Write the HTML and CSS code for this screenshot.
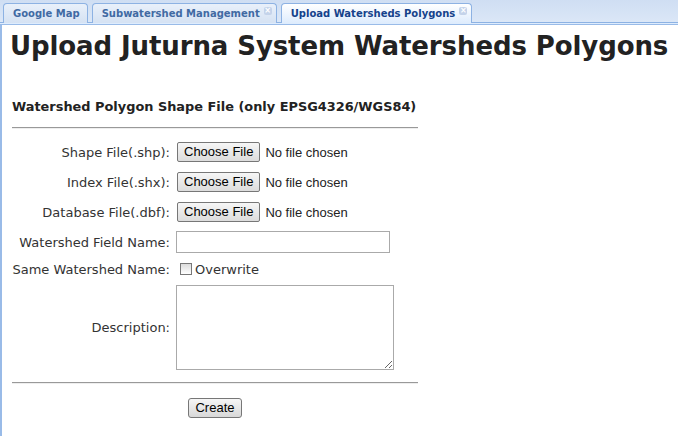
FILE: index.html
```html
<!DOCTYPE html>
<html>
<head>
<meta charset="utf-8">
<link rel="stylesheet" href="styles.css">
</head>
<body>
<div class="tabstrip">
  <div class="tab"><span class="tab-label">Google Map</span></div>
  <div class="tab closable"><span class="tab-label">Subwatershed Management</span><span class="tab-close">×</span></div>
  <div class="tab closable active"><span class="tab-label">Upload Watersheds Polygons</span><span class="tab-close">×</span></div>
</div>
<div class="tab-edge"></div>
<div class="panel">
  <h1 class="title">Upload Juturna System Watersheds Polygons</h1>
  <div class="section">
    <h2 class="section-title">Watershed Polygon Shape File (only EPSG4326/WGS84)</h2>
    <div class="rule"></div>
    <div class="form">
      <div class="lbl">Shape File(.shp):</div>
      <div class="fld"><span class="filebtn">Choose File</span><span class="nofile">No file chosen</span></div>
      <div class="lbl">Index File(.shx):</div>
      <div class="fld"><span class="filebtn">Choose File</span><span class="nofile">No file chosen</span></div>
      <div class="lbl">Database File(.dbf):</div>
      <div class="fld"><span class="filebtn">Choose File</span><span class="nofile">No file chosen</span></div>
      <div class="lbl">Watershed Field Name:</div>
      <div class="fld"><input class="textin" type="text"></div>
      <div class="lbl">Same Watershed Name:</div>
      <div class="fld"><span class="check"></span><span class="chklabel">Overwrite</span></div>
      <div class="lbl">Description:</div>
      <div class="fld"><textarea class="desc"></textarea></div>
    </div>
    <div class="rule rule2"></div>
    <div class="actions"><span class="btn">Create</span></div>
  </div>
</div>
</body>
</html>
```
FILE: styles.css
```css
html, body { margin: 0; padding: 0; background: #fff; }
body { width: 678px; height: 436px; overflow: hidden; font-family: "DejaVu Sans", Verdana, sans-serif; }

.tabstrip {
  height: 23px;
  box-sizing: border-box;
  background: linear-gradient(#cfdef3, #dbe7f7);
  border-bottom: 1px solid #8db2e3;
  display: flex;
  align-items: flex-end;
  padding-left: 3px;
  gap: 4px;
}
.tab {
  height: 20px;
  box-sizing: border-box;
  border: 1px solid #8db2e3;
  border-bottom: none;
  border-radius: 4px 4px 0 0;
  background: linear-gradient(#e9f0fa, #d5e2f3);
  margin-bottom: -1px;
  display: flex;
  align-items: center;
  padding: 0 7px 0 9px;
  font-size: 10px;
  font-weight: bold;
  color: #416aa3;
  white-space: nowrap;
}
.tab.closable { padding-right: 4px; }
.tab.active {
  background: linear-gradient(#ffffff, #deecfd);
  color: #15428b;
}
.tab-close {
  display: inline-block;
  width: 8px; height: 8px;
  margin-left: 4px;
  margin-top: -6px;
  border-radius: 2px;
  background: #c4d3ea;
  color: #fff;
  font-size: 8px;
  line-height: 8px;
  text-align: center;
}
.tab-edge {
  height: 1px;
  background: #deecfd;
  border-bottom: 1px solid #99bbe8;
}
.panel {
  border-left: 2px solid #99bbe8;
  height: 411px;
  box-sizing: border-box;
  padding-left: 8px;
}
.title {
  margin: 0;
  padding-top: 4px;
  font-size: 26px;
  font-weight: bold;
  color: #222;
  line-height: 34px;
  letter-spacing: -0.1px;
  white-space: nowrap;
}
.section { width: 406px; margin-left: 2px; padding-top: 36px; }
.section-title {
  margin: 0;
  font-size: 12.9px;
  font-weight: bold;
  color: #222;
  line-height: 16px;
  white-space: nowrap;
}
.rule { height: 0; border-top: 1px solid #999; border-bottom: 1px solid #eee; margin-top: 12px; }
.form {
  display: grid;
  grid-template-columns: 158px 1fr;
  grid-template-rows: 22px 22px 22px 22px 16px auto;
  column-gap: 6px;
  row-gap: 8px;
  margin-top: 12px;
  font-size: 13px;
  color: #333;
}
.lbl { display: flex; align-items: center; justify-content: flex-end; white-space: nowrap; }
.fld { display: flex; align-items: center; }
.filebtn {
  font-family: "Liberation Sans", Arial, sans-serif;
  font-size: 13px;
  color: #000;
  border: 1px solid #777;
  border-radius: 2px;
  background: linear-gradient(#f6f6f6, #dcdcdc);
  height: 20px;
  box-sizing: border-box;
  padding: 0 6px;
  line-height: 18px;
  margin-left: 1px;
}
.nofile { font-family: "Liberation Sans", Arial, sans-serif; font-size: 13px; color: #222; margin-left: 5px; }
.textin {
  width: 214px; height: 22px; box-sizing: border-box;
  border: 1px solid #aaa; margin: 0; padding: 0;
}
.check {
  display: inline-block; width: 12px; height: 12px; box-sizing: border-box;
  border: 1px solid #777; background: linear-gradient(#dcdcdc, #fff);
  margin-left: 4px;
}
.chklabel { margin-left: 3px; }
.desc {
  display: block;
  width: 218px; height: 85px; box-sizing: border-box;
  border: 1px solid #aaa; margin: 0; padding: 0; resize: both;
}
.rule2 { margin-top: 12px; }
.actions { text-align: center; margin-top: 13px; }
.btn {
  display: inline-block;
  font-family: "Liberation Sans", Arial, sans-serif;
  font-size: 13px; color: #000;
  border: 1px solid #777; border-radius: 3px;
  background: linear-gradient(#f6f6f6, #d8d8d8);
  height: 20px; box-sizing: border-box; line-height: 18px;
  padding: 0 6px;
}
```
